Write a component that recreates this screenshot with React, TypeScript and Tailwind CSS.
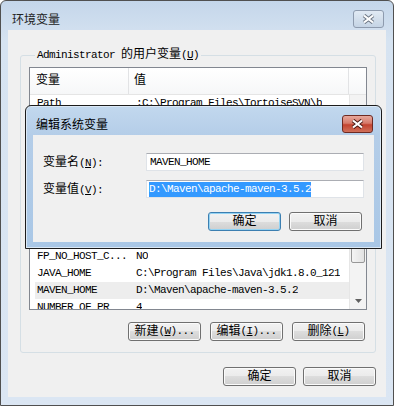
import React from 'react';

const rows: Array<[string, string]> = [
  ['Path', ';C:\\Program Files\\TortoiseSVN\\b'],
  ['CLASSPATH', '.;%JAVA_HOME%\\lib'],
  ['ComSpec', 'C:\\Windows\\system32\\cmd.exe'],
  ['TEMP', '%USERPROFILE%\\AppData\\Local\\Temp'],
  ['TMP', '%USERPROFILE%\\AppData\\Local\\Temp'],
  ['windir', 'C:\\Windows'],
  ['OS', 'Windows_NT'],
  ['PATHEXT', '.COM;.EXE;.BAT;.CMD;.VBS'],
  ['PSModulePath', 'C:\\Windows\\system32\\Windows'],
  ['FP_NO_HOST_C...', 'NO'],
  ['JAVA_HOME', 'C:\\Program Files\\Java\\jdk1.8.0_121'],
  ['MAVEN_HOME', 'D:\\Maven\\apache-maven-3.5.2'],
  ['NUMBER_OF_PR', '4'],
  ['PROCESSOR_AR', 'AMD64'],
];

const L = ({ children }: { children: React.ReactNode }) => (
  <span className="text-[11px] tracking-[-0.6px]">{children}</span>
);

const Btn = ({ children, primary }: { children: React.ReactNode; primary?: boolean }) => (
  <div
    className={
      primary
        ? 'flex h-[19px] w-[73px] items-center justify-center rounded-[3px] border border-[#3c7fb1] bg-[linear-gradient(#f2f2f2_0%,#ebebeb_50%,#dddddd_50%,#cfcfcf_100%)] shadow-[inset_0_0_0_1px_#94d3f3] text-black'
        : 'flex h-[19px] w-[73px] items-center justify-center rounded-[3px] border border-[#707070] bg-[linear-gradient(#f2f2f2_0%,#ebebeb_50%,#dddddd_50%,#cfcfcf_100%)] shadow-[inset_0_0_0_1px_#fbfbfb] text-black'
    }
  >
    {children}
  </div>
);

const CloseX = ({ red }: { red?: boolean }) => (
  <div
    className={
      red
        ? 'flex h-[18px] w-[31px] items-center justify-center rounded-[3px] border border-[#6e2a22] bg-[linear-gradient(#e7a89c_0%,#d67a6a_45%,#c3432f_55%,#d0705a_100%)]'
        : 'flex h-[18px] w-[31px] items-center justify-center rounded-[3px] border border-[#8e9bae] bg-[linear-gradient(#e1eaf4_0%,#d3dfec_50%,#c5d4e5_100%)]'
    }
  >
    <svg width="13" height="10" viewBox="0 0 13 10">
      <path d="M2 1.5 L11 8.5 M11 1.5 L2 8.5" stroke={red ? '#4a1a14' : '#6d7785'} strokeWidth="4" />
      <path d="M2 1.5 L11 8.5 M11 1.5 L2 8.5" stroke="#ffffff" strokeWidth="2.2" />
    </svg>
  </div>
);

export default function App() {
  return (
    <div className="relative h-[406px] w-[394px] overflow-hidden bg-white font-['Liberation_Mono','Noto_Sans_CJK_SC',monospace] text-[12px] leading-none text-black">
      {/* outer window */}
      <div className="flex h-[406px] w-[394px] flex-col rounded-t-[6px] border border-[#505050] bg-[linear-gradient(#c4d6ea_0px,#d6e3f1_40px,#dbe6f3_100%)] px-[7px] pb-[8px]">
        <div className="flex h-[29px] shrink-0 items-start justify-between pl-[4px] pr-[2px] pt-[9px]">
          <span className="mt-[3px] font-['Noto_Sans_CJK_SC',sans-serif] text-[12px] text-[#222]">环境变量</span>
          <CloseX />
        </div>
        <div className="flex flex-1 flex-col bg-[#f0f0f0] pl-[12px] pr-[10px] pt-[17px]">
          <fieldset className="flex h-[306px] flex-col rounded-[3px] border border-[#d5dfe5] px-[8px] pb-[11px]">
            <legend className="ml-[6px] px-[2px] leading-[16px]">
              <L>Administrator </L>的用户变量<L>(<u>U</u>)</L>
            </legend>
            <div className="mt-[4px] flex h-[243px] flex-col border border-[#828790] bg-white">
              <div className="flex h-[27px] shrink-0 border-b border-[#e5e5e5] bg-[linear-gradient(#ffffff,#f6f7f8)]">
                <div className="flex w-[99px] items-center border-r border-[#e2e3e5] pl-[6px]">变量</div>
                <div className="flex flex-1 items-center border-r border-[#e2e3e5] pl-[5px]">值</div>
                <div className="w-[17px]" />
              </div>
              <div className="flex min-h-0 flex-1">
                <div className="min-w-0 flex-1 overflow-hidden">
                  {rows.map(([n, v]) => (
                    <div
                      key={n}
                      className={
                        n === 'MAVEN_HOME'
                          ? 'ml-[5px] flex h-[17px] items-center bg-[#ededed] text-[11px] tracking-[-0.6px]'
                          : 'ml-[5px] flex h-[17px] items-center text-[11px] tracking-[-0.6px]'
                      }
                    >
                      <div className="w-[100px] shrink-0 overflow-hidden whitespace-nowrap pl-[2px]">{n}</div>
                      <div className="overflow-hidden whitespace-nowrap pl-[1px]">{v}</div>
                    </div>
                  ))}
                </div>
                <div className="flex w-[17px] shrink-0 flex-col border-l border-[#e6e6e6] bg-[#f3f3f3]">
                  <div className="h-[17px]" />
                  <div className="flex-1" />
                  <div className="mx-[1px] h-[70px] rounded-[2px] border border-[#979797] bg-[linear-gradient(90deg,#f4f4f4,#e2e2e2)]" />
                  <div className="h-[30px]" />
                  <div className="flex h-[16px] items-center justify-center">
                    <svg width="7" height="4" viewBox="0 0 7 4">
                      <path d="M0 0 H7 L3.5 4 Z" fill="#606060" />
                    </svg>
                  </div>
                </div>
              </div>
            </div>
            <div className="mt-[12px] flex justify-end gap-[9px] pr-[2px]">
              <Btn>
                新建<L>(<u>W</u>)...</L>
              </Btn>
              <Btn>
                编辑<L>(<u>I</u>)...</L>
              </Btn>
              <Btn>
                删除<L>(<u>L</u>)</L>
              </Btn>
            </div>
          </fieldset>
          <div className="mt-[14px] flex justify-end gap-[7px]">
            <Btn>确定</Btn>
            <Btn>取消</Btn>
          </div>
        </div>
      </div>

      {/* edit dialog */}
      <div className="absolute left-[25px] top-[105px] flex h-[144px] w-[357px] flex-col rounded-t-[6px] border border-[#1c1c1c] bg-[linear-gradient(#c2d8ee_0px,#b4cde8_30px,#a9c7e6_100%)] px-[7px] pb-[6px] shadow-[inset_0_0_0_1px_#dbe8f5]">
        <div className="flex h-[29px] shrink-0 items-start justify-between pl-[3px] pr-[1px] pt-[9px]">
          <span className="mt-[3px] font-['Noto_Sans_CJK_SC',sans-serif] text-[12px] text-black">编辑系统变量</span>
          <CloseX red />
        </div>
        <div className="flex flex-1 flex-col bg-[#f0f0f0] pl-[10px] pr-[10px] pt-[18px]">
          <div className="flex h-[18px] items-center">
            <div className="w-[103px] pt-[2px]">
              变量名<L>(<u>N</u>):</L>
            </div>
            <div className="flex h-[18px] flex-1 items-center border border-[#dfe3e8] border-t-[#abadb3] bg-white pl-[3px] text-[11px] tracking-[-0.6px]">
              MAVEN_HOME
            </div>
          </div>
          <div className="mt-[9px] flex h-[18px] items-center">
            <div className="w-[103px] pt-[2px]">
              变量值<L>(<u>V</u>):</L>
            </div>
            <div className="flex h-[18px] flex-1 items-center border border-[#dfe3e8] border-t-[#abadb3] bg-white pl-[2px] text-[11px] tracking-[-0.6px]">
              <span className="bg-[#3399ff] py-[2px] text-white">D:\Maven\apache-maven-3.5.2</span>
            </div>
          </div>
          <div className="mt-[14px] flex justify-end gap-[8px] pr-[2px]">
            <Btn primary>确定</Btn>
            <Btn>取消</Btn>
          </div>
        </div>
      </div>
    </div>
  );
}
